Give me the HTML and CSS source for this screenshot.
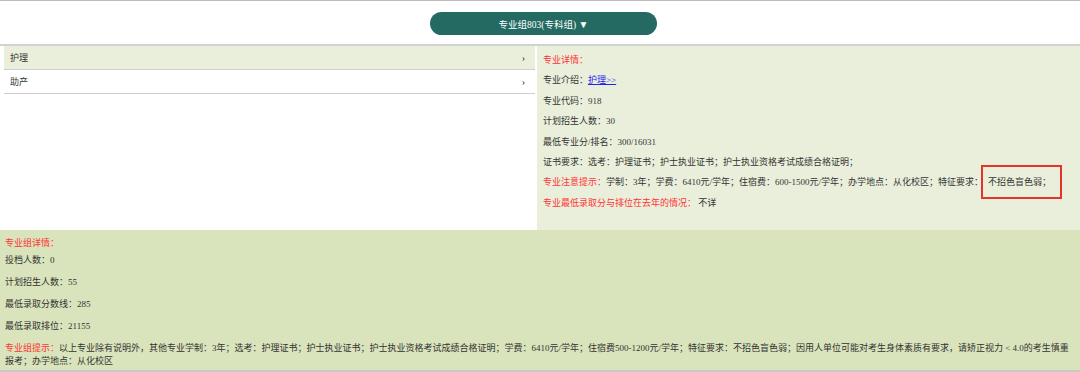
FILE: index.html
```html
<!DOCTYPE html>
<html lang="zh-CN">
<head>
    <meta charset="UTF-8">
    <title>专业组803(专科组)</title>
    <link rel="stylesheet" href="styles.css">
</head>
<body>
    <div class="header">
        <button class="group-btn">专业组803(专科组) <span class="caret">▼</span></button>
    </div>

    <div class="main">
        <div class="side">
            <ul class="major-list">
                <li class="active"><span>护理</span><span class="arrow">›</span></li>
                <li><span>助产</span><span class="arrow">›</span></li>
            </ul>
        </div>
        <div class="detail">
            <div class="row red">专业详情：</div>
            <div class="row">专业介绍：<a href="#">护理&gt;&gt;</a></div>
            <div class="row">专业代码：918</div>
            <div class="row">计划招生人数：30</div>
            <div class="row">最低专业分/排名：300/16031</div>
            <div class="row">证书要求：选考：护理证书；护士执业证书；护士执业资格考试成绩合格证明；</div>
            <div class="row"><span class="red">专业注意提示：</span>学制：3年；学费：6410元/学年；住宿费：600-1500元/学年；办学地点：从化校区；特征要求：<span class="mark">不招色盲色弱；</span></div>
            <div class="row"><span class="red">专业最低录取分与排位在去年的情况：</span> 不详</div>
        </div>
    </div>

    <div class="group">
        <div class="group-title red">专业组详情：</div>
        <p>投档人数：0</p>
        <p>计划招生人数：55</p>
        <p>最低录取分数线：285</p>
        <p>最低录取排位：21155</p>
        <p><span class="red">专业组提示：</span>以上专业除有说明外，其他专业学制：3年；选考：护理证书；护士执业证书；护士执业资格考试成绩合格证明；学费：6410元/学年；住宿费500-1200元/学年；特征要求：不招色盲色弱；因用人单位可能对考生身体素质有要求，请矫正视力 &lt; 4.0的考生慎重报考；办学地点：从化校区</p>
    </div>
</body>
</html>
```

FILE: styles.css
```css
body {
    margin: 0;
    font-family: "Liberation Serif", "Noto Sans CJK SC", serif;
    font-size: 9px;
    color: #333;
    background: #fff;
}
.red {
    color: #f33;
}
.header {
    border-top: 1px solid #bbb;
    border-bottom: 2px solid #d2d2d2;
    display: flex;
    align-items: center;
    justify-content: center;
    padding-left: 7px;
    box-sizing: border-box;
    height: 46px;
}
.group-btn {
    width: 227px;
    height: 23px;
    border: none;
    border-radius: 12px;
    background-color: #246a62;
    color: #fff;
    font-family: "Liberation Serif", "Noto Sans CJK SC", serif;
    font-size: 9.5px;
    padding: 0;
    margin-top: 2px;
}
.caret {
    font-size: 10px;
}
.main {
    display: flex;
    height: 184px;
}
.side {
    width: 537px;
    padding-left: 4px;
    box-sizing: border-box;
}
.major-list {
    list-style: none;
    margin: 0;
    padding: 0;
    width: 531px;
}
.major-list li {
    display: flex;
    justify-content: space-between;
    align-items: center;
    height: 23px;
    padding: 0 10px 0 6px;
    border-bottom: 1px solid #cfcfcf;
}
.major-list li.active {
    background-color: #eaefdc;
}
.arrow {
    font-size: 10px;
}
.detail {
    flex: 1;
    background-color: #eaefdc;
    padding: 4px 0 0 6px;
}
.row {
    line-height: 20.4px;
    white-space: nowrap;
}
.row a {
    color: #22e;
}
.mark {
    padding: 10px 9px 10px 5px;
    margin-left: -2px;
    border: 2px solid #e5332a;
}
.group {
    background-color: #d9e4bc;
    padding: 7px 3px 3px 5px;
    border-bottom: 2px solid #c9c9c9;
}
.group-title {
    line-height: 12px;
}
.group p {
    margin: 5px 0 0;
    line-height: 12.5px;
}
.group p + p {
    margin-top: 9.5px;
}
```
